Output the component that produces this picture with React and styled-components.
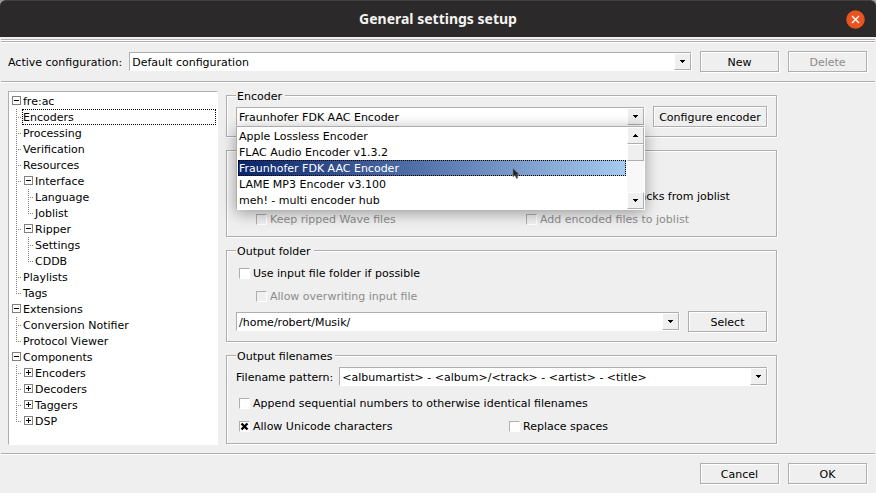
import React from "react";
import styled, { createGlobalStyle, css } from "styled-components";

const face = "#efefef";
const line = "#aeaeae";

const GlobalStyle = createGlobalStyle`
  *, *::before, *::after { box-sizing: border-box; }
  body {
    margin: 0;
    background: ${face};
    color: #000;
    font: 11px/16px "DejaVu Sans", Verdana, sans-serif;
  }
  button, input, select { font: inherit; color: inherit; }
`;

const Window = styled.main`
  display: flex;
  flex-direction: column;
  min-height: 100vh;
  background: ${face};
`;

const TitleFrame = styled.div`
  background: #9a9a9a;
`;

const TitleBar = styled.header`
  display: grid;
  grid-template-columns: 19px 1fr 19px;
  align-items: center;
  height: 37px;
  padding: 0 11px;
  background: #2c292a;
  border-top: 1px solid #434041;
  border-radius: 6px 6px 0 0;
`;

const Title = styled.h1`
  grid-column: 2;
  margin: 0;
  color: #f4f3f0;
  font: bold 14px/20px "Noto Sans", "Open Sans", sans-serif;
  text-align: center;
`;

const CloseButton = styled.button`
  display: block;
  width: 19px;
  height: 19px;
  padding: 0;
  border: 0;
  background: none;
  svg { display: block; }
`;

const Rule = styled.hr`
  flex: none;
  width: calc(100% - 2px);
  height: 2px;
  margin: ${(p) => (p.$first ? "2px 1px 0" : "0 1px")};
  border: 0;
  border-top: 1px solid ${line};
  background: #fff;
`;

const ConfigRow = styled.div`
  display: flex;
  align-items: center;
  gap: 9px;
  padding: 8px 9px 9px 8px;
`;

const Field = styled.div`
  display: flex;
  flex: 1;
  min-width: 0;
  align-items: center;
  gap: ${(p) => p.$gap || 0}px;
`;

const FieldLabel = styled.label`
  padding-top: 2px;
  white-space: nowrap;
`;

const Button = styled.button`
  flex: none;
  width: ${(p) => (p.$wide ? 114 : 79)}px;
  height: 21px;
  padding: 2px 0 0;
  border: 1px solid ${line};
  background: ${face};
  box-shadow: 1px 1px 0 #fff, inset 1px 1px 0 #fff;
  line-height: 17px;
  white-space: nowrap;
  &:disabled { color: #8c8c8c; }
`;

const ComboFrame = styled.div`
  position: relative;
  display: grid;
  flex: 1;
  min-width: 0;
  grid-template-columns: minmax(0, 1fr) 17px;
  height: 19px;
  border-top: 1px solid ${line};
  border-left: 1px solid ${line};
  border-bottom: 1px solid #fff;
  background: #fff;
  box-shadow: 1px 0 0 #fff;
`;

const valueBox = css`
  grid-row: 1;
  height: 17px;
  width: 100%;
  padding: 2px 2px 0;
  border: 0;
  border-radius: 0;
  outline: 0;
  background: none;
  line-height: 15px;
`;

const ComboSelect = styled.select`
  ${valueBox}
  grid-column: 1 / 3;
  appearance: none;
`;

const ComboInput = styled.input`
  ${valueBox}
  grid-column: 1;
`;

const ArrowFace = styled.span`
  display: flex;
  align-items: center;
  justify-content: center;
  width: 17px;
  height: 17px;
  border: 1px solid ${line};
  border-top-color: #fff;
  border-left-color: #fff;
  background: ${face};
  pointer-events: none;
  grid-area: 1 / 2;
`;

const ArrowButton = styled.button`
  display: flex;
  align-items: center;
  justify-content: center;
  width: 17px;
  height: 17px;
  padding: 0;
  border: 1px solid ${line};
  border-top-color: #fff;
  border-left-color: #fff;
  background: ${face};
`;

const Content = styled.div`
  display: grid;
  flex: 1;
  grid-template-columns: 210px minmax(0, 551px);
  gap: 8px;
  padding: 5px 9px 8px 8px;
`;

const Tree = styled.ul`
  margin: 3px 0 0;
  padding: 1px;
  border: 1px solid ${line};
  border-right-color: #fff;
  border-bottom-color: #fff;
  background: #fff;
  list-style: none;
`;

const TreeRow = styled.li`
  display: flex;
  height: 16px;
  svg { flex: none; display: block; }
`;

const TreeLabel = styled.span`
  flex: 1;
  padding-left: 1px;
  line-height: 17px;
  outline: ${(p) => (p.$selected ? "1px dotted #000" : "none")};
  outline-offset: -1px;
`;

const Groups = styled.div`
  display: flex;
  flex-direction: column;
  gap: 6px;
  padding-bottom: 1px;
`;

const Group = styled.fieldset`
  min-width: 0;
  margin: ${(p) => (p.$untitled ? 7 : 0)}px 0 0;
  padding: ${(p) => p.$top}px 9px ${(p) => p.$bottom}px;
  border: 1px solid ${line};
  box-shadow: 1px 1px 0 #fff, inset 1px 1px 0 #fff;
`;

const Legend = styled.legend`
  padding: 2px 3px 0 1px;
  background: ${face};
  line-height: 13px;
`;

const ControlRow = styled.div`
  display: flex;
  align-items: center;
  gap: ${(p) => p.$gap || 9}px;
  margin: ${(p) => p.$top || 0}px 0 ${(p) => p.$bottom || 0}px;
`;

const PatternRow = styled(ControlRow)`
  height: 19px;
`;

const CheckGrid = styled.div`
  display: grid;
  grid-template-columns: 270px 1fr;
  padding-left: 3px;
`;

const CheckLabel = styled.label`
  display: flex;
  align-items: center;
  gap: 3px;
  height: 23px;
  padding-left: ${(p) => (p.$indent ? 17 : 0)}px;
  grid-column: ${(p) => p.$column || 1};
  color: ${(p) => (p.$disabled ? "#8c8c8c" : "#000")};
  white-space: nowrap;
`;

const CheckBox = styled.input`
  display: grid;
  place-items: center;
  flex: none;
  width: 11px;
  height: 11px;
  margin: 0 0 1px;
  border: 1px solid ${line};
  border-right-color: #fff;
  border-bottom-color: #fff;
  appearance: none;
  background: #fff;
  &:disabled { background: ${face}; }
  &:checked {
    background: #fff url("data:image/svg+xml,%3Csvg xmlns='http://www.w3.org/2000/svg' viewBox='0 0 9 9'%3E%3Cpath d='M1.5 1.5L7.5 7.5M7.5 1.5L1.5 7.5' stroke='black' stroke-width='2.4'/%3E%3C/svg%3E") center / 9px 9px no-repeat;
  }
`;

const Popup = styled.div`
  position: absolute;
  z-index: 2;
  top: 18px;
  left: -1px;
  right: -1px;
  display: grid;
  grid-template-columns: minmax(0, 1fr) 17px;
  height: 84px;
  border: 1px solid ${line};
  border-right-color: #fff;
  border-bottom-color: #fff;
  background: #fff;
  box-shadow: 0 3px 14px rgba(0, 0, 0, 0.36);
`;

const Options = styled.ul`
  margin: 0;
  padding: 1px;
  list-style: none;
`;

const Option = styled.li`
  position: relative;
  height: 16px;
  padding-left: 1px;
  line-height: 17px;
  ${(p) =>
    p.$selected &&
    css`
      color: #fff;
      background: linear-gradient(90deg, #0a246a, #a6caf0);
      outline: 1px dotted #000;
      outline-offset: -1px;
    `}
`;

const Pointer = styled.svg`
  position: absolute;
  top: 8px;
  right: 106px;
`;

const Scrollbar = styled.div`
  display: flex;
  flex-direction: column;
  background: #f8f8f8;
`;

const Thumb = styled.div`
  flex: none;
  height: 17px;
  border: 1px solid ${line};
  border-top-color: #fff;
  border-left-color: #fff;
  background: ${face};
`;

const Track = styled.div`
  flex: 1;
`;

const Footer = styled.footer`
  display: flex;
  justify-content: flex-end;
  gap: 9px;
  padding: 8px 9px 9px;
`;

function Triangle({ up }) {
  return (
    <svg width="5" height="3" viewBox="0 0 5 3" shapeRendering="crispEdges" aria-hidden="true">
      <path d={up ? "M2 0h1v1h1v1h1v1H0V2h1V1h1z" : "M0 0h5v1H4v1H3v1H2V2H1V1H0z"} />
    </svg>
  );
}

function Combo({ id, value, label, children }) {
  return (
    <ComboFrame>
      <ComboSelect id={id} aria-label={label} defaultValue={value}>
        <option>{value}</option>
      </ComboSelect>
      <ArrowFace><Triangle /></ArrowFace>
      {children}
    </ComboFrame>
  );
}

function EditCombo({ id, value, label }) {
  return (
    <ComboFrame>
      <ComboInput id={id} aria-label={label} defaultValue={value} />
      <ArrowButton type="button" aria-label="Show choices"><Triangle /></ArrowButton>
    </ComboFrame>
  );
}

function Check({ text, checked, disabled, indent, column }) {
  return (
    <CheckLabel $disabled={disabled} $indent={indent} $column={column}>
      <CheckBox type="checkbox" defaultChecked={checked} disabled={disabled} />
      {text}
    </CheckLabel>
  );
}

/* Guide kinds: "-" open box, "+" closed box, "t" branch, "l" last branch, "i" line */
function Guide({ kind }) {
  const dots = { stroke: "#808080", strokeDasharray: "1 1", fill: "none" };
  return (
    <svg width="12" height="16" viewBox="0 0 12 16" shapeRendering="crispEdges" aria-hidden="true">
      {(kind === "t" || kind === "i") && <path d="M6.5 0V16" {...dots} />}
      {kind === "l" && <path d="M6.5 0V9" {...dots} />}
      {(kind === "t" || kind === "l") && <path d="M6 8.5H11" {...dots} />}
      {(kind === "-" || kind === "+") && (
        <>
          <rect x="2.5" y="3.5" width="8" height="8" fill="#fff" stroke="#808080" />
          <path d="M4 7.5H9" stroke="#000" />
        </>
      )}
      {kind === "+" && <path d="M6.5 5V10" stroke="#000" />}
    </svg>
  );
}

const treeRows = [
  ["-", "fre:ac"],
  ["t", "Encoders", true],
  ["t", "Processing"],
  ["t", "Verification"],
  ["t", "Resources"],
  ["t-", "Interface"],
  ["it", "Language"],
  ["il", "Joblist"],
  ["t-", "Ripper"],
  ["it", "Settings"],
  ["il", "CDDB"],
  ["t", "Playlists"],
  ["l", "Tags"],
  ["-", "Extensions"],
  ["t", "Conversion Notifier"],
  ["l", "Protocol Viewer"],
  ["-", "Components"],
  ["t+", "Encoders"],
  ["t+", "Decoders"],
  ["t+", "Taggers"],
  ["l+", "DSP"],
];

const encoders = [
  "Apple Lossless Encoder",
  "FLAC Audio Encoder v1.3.2",
  "Fraunhofer FDK AAC Encoder",
  "LAME MP3 Encoder v3.100",
  "meh! - multi encoder hub",
];
const currentEncoder = encoders[2];

function EncoderPopup() {
  return (
    <Popup>
      <Options role="listbox" aria-label="Encoders">
        {encoders.map((name) => (
          <Option key={name} role="option" aria-selected={name === currentEncoder} $selected={name === currentEncoder}>
            {name}
            {name === currentEncoder && (
              <Pointer width="8" height="12" viewBox="0 0 8 12" aria-hidden="true">
                <path d="M1 0.5V9L3 7.2L4.6 10.5L6 9.8L4.6 6.6H7.2Z" fill="#222" stroke="#777" strokeWidth="0.6" />
              </Pointer>
            )}
          </Option>
        ))}
      </Options>
      <Scrollbar>
        <ArrowButton type="button" aria-label="Scroll up"><Triangle up /></ArrowButton>
        <Thumb />
        <Track />
        <ArrowButton type="button" aria-label="Scroll down"><Triangle /></ArrowButton>
      </Scrollbar>
    </Popup>
  );
}

export default function App() {
  return (
    <Window>
      <GlobalStyle />
      <TitleFrame>
        <TitleBar>
          <Title>General settings setup</Title>
          <CloseButton type="button" aria-label="Close">
            <svg width="19" height="19" viewBox="0 0 19 19">
              <circle cx="9.5" cy="9.5" r="9.3" fill="#e95420" />
              <path d="M6 6L13 13M13 6L6 13" stroke="#fff" strokeWidth="1.4" />
            </svg>
          </CloseButton>
        </TitleBar>
      </TitleFrame>
      <Rule $first />
      <Rule />

      <ConfigRow>
        <Field $gap={7}>
          <FieldLabel htmlFor="configuration">Active configuration:</FieldLabel>
          <Combo id="configuration" value="Default configuration" />
        </Field>
        <Button type="button">New</Button>
        <Button type="button" disabled>Delete</Button>
      </ConfigRow>
      <Rule />

      <Content>
        <Tree role="tree" aria-label="Settings pages">
          {treeRows.map(([guides, name, selected], index) => (
            <TreeRow key={index} role="treeitem" aria-selected={Boolean(selected)}>
              {guides.split("").map((kind, i) => <Guide key={i} kind={kind} />)}
              <TreeLabel $selected={selected}>{name}</TreeLabel>
            </TreeRow>
          ))}
        </Tree>

        <Groups>
          <Group $top={3} $bottom={9}>
            <Legend>Encoder</Legend>
            <ControlRow>
              <Combo value={currentEncoder} label="Encoder"><EncoderPopup /></Combo>
              <Button type="button" $wide>Configure encoder</Button>
            </ControlRow>
          </Group>

          <Group $untitled $top={34} $bottom={5} aria-label="Options">
            <CheckGrid>
              <Check text="Remove processed tracks from joblist" column={2} />
              <Check text="Keep ripped Wave files" indent disabled />
              <Check text="Add encoded files to joblist" column={2} indent disabled />
            </CheckGrid>
          </Group>

          <Group $top={4} $bottom={9}>
            <Legend>Output folder</Legend>
            <CheckGrid>
              <Check text="Use input file folder if possible" />
              <Check text="Allow overwriting input file" indent disabled />
            </CheckGrid>
            <ControlRow $top={3}>
              <EditCombo value="/home/robert/Musik/" label="Output folder" />
              <Button type="button">Select</Button>
            </ControlRow>
          </Group>

          <Group $top={4} $bottom={5}>
            <Legend>Output filenames</Legend>
            <PatternRow $gap={6} $bottom={6}>
              <FieldLabel htmlFor="pattern">Filename pattern:</FieldLabel>
              <EditCombo id="pattern" value="<albumartist> - <album>/<track> - <artist> - <title>" />
            </PatternRow>
            <CheckGrid>
              <Check text="Append sequential numbers to otherwise identical filenames" />
              <Check text="Allow Unicode characters" checked />
              <Check text="Replace spaces" column={2} />
            </CheckGrid>
          </Group>
        </Groups>
      </Content>
      <Rule />

      <Footer>
        <Button type="button">Cancel</Button>
        <Button type="button">OK</Button>
      </Footer>
    </Window>
  );
}
